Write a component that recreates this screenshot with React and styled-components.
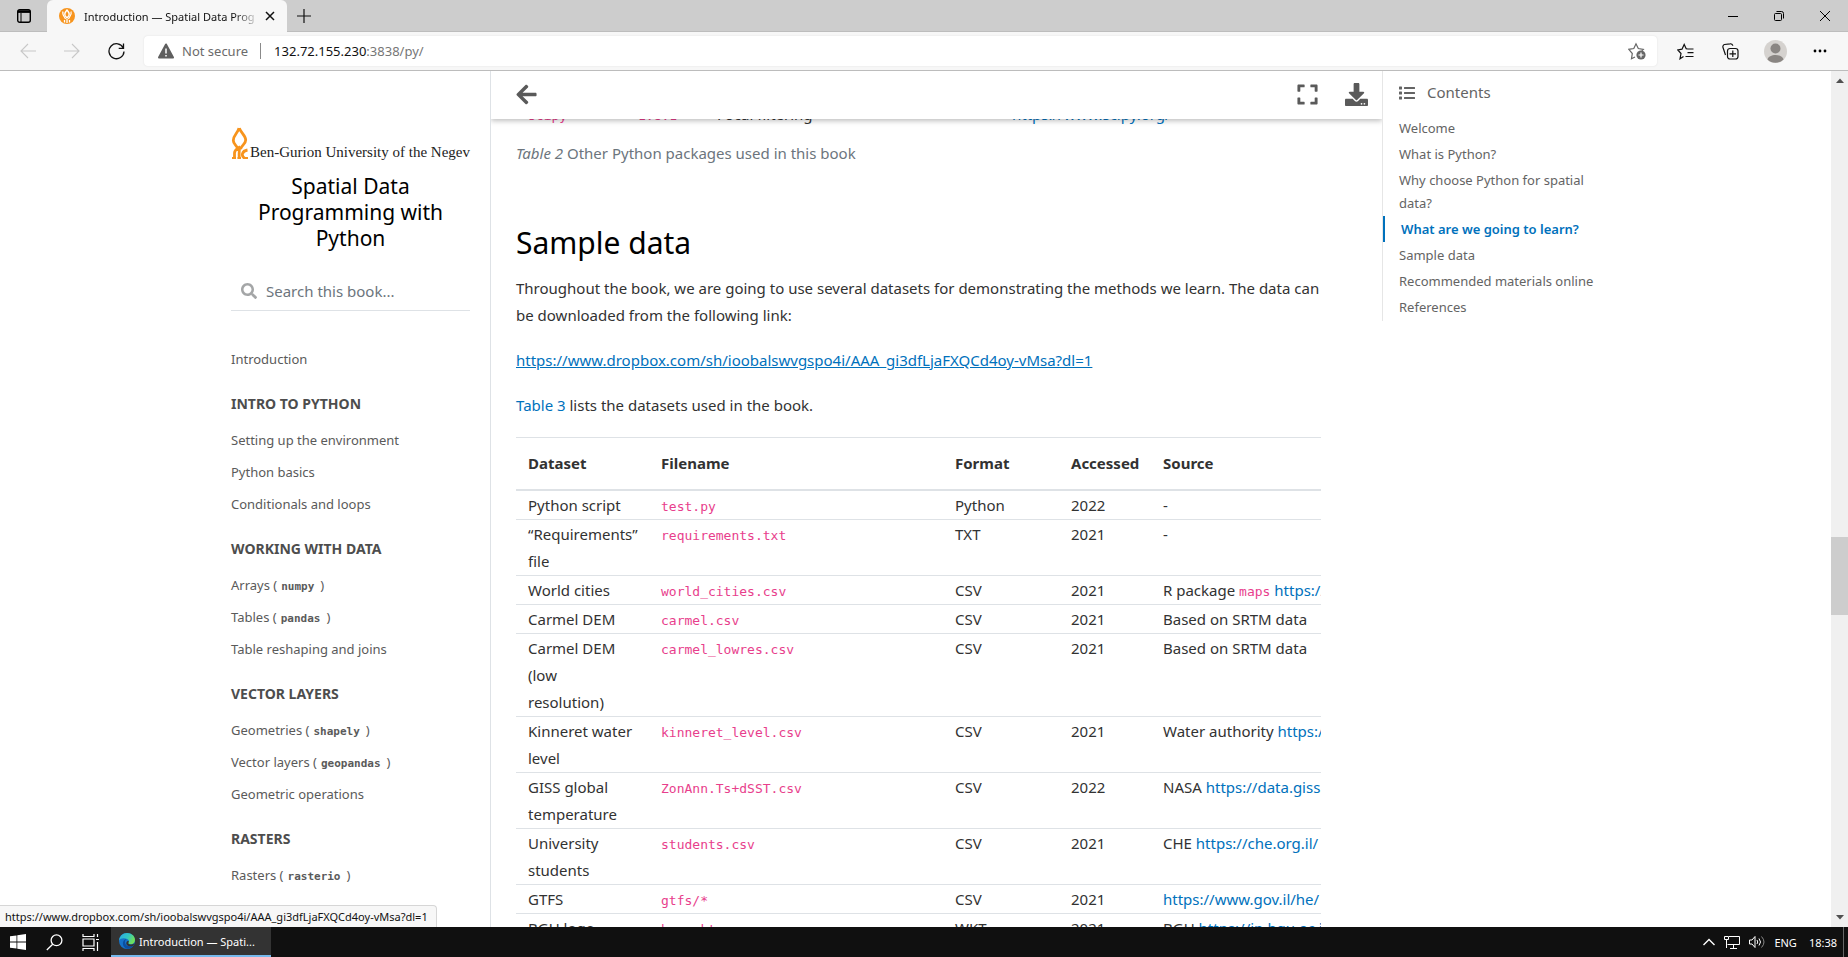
import React from "react";
import styled, { createGlobalStyle } from "styled-components";
import {
  FaArrowLeft,
  FaDownload,
  FaExpand,
  FaList,
  FaSearch,
} from "react-icons/fa";

const DROPBOX_URL =
  "https://www.dropbox.com/sh/ioobalswvgspo4i/AAA_gi3dfLjaFXQCd4oy-vMsa?dl=1";

const chapters = [
  {
    title: "Intro to Python",
    items: [
      { text: "Setting up the environment" },
      { text: "Python basics" },
      { text: "Conditionals and loops" },
    ],
  },
  {
    title: "Working with data",
    items: [
      { text: "Arrays", code: "numpy" },
      { text: "Tables", code: "pandas" },
      { text: "Table reshaping and joins" },
    ],
  },
  {
    title: "Vector layers",
    items: [
      { text: "Geometries", code: "shapely" },
      { text: "Vector layers", code: "geopandas" },
      { text: "Geometric operations" },
    ],
  },
  {
    title: "Rasters",
    items: [{ text: "Rasters", code: "rasterio" }],
  },
];

const contents = [
  "Welcome",
  "What is Python?",
  "Why choose Python for spatial data?",
  "What are we going to learn?",
  "Sample data",
  "Recommended materials online",
  "References",
];

const datasets = [
  { name: "Python script", file: "test.py", format: "Python", year: "2022", source: "-" },
  { name: "“Requirements” file", file: "requirements.txt", format: "TXT", year: "2021", source: "-" },
  { name: "World cities", file: "world_cities.csv", format: "CSV", year: "2021", source: "R package ", code: "maps", link: "https://www.r-project.org/" },
  { name: "Carmel DEM", file: "carmel.csv", format: "CSV", year: "2021", source: "Based on SRTM data" },
  { name: "Carmel DEM (low resolution)", file: "carmel_lowres.csv", format: "CSV", year: "2021", source: "Based on SRTM data" },
  { name: "Kinneret water level", file: "kinneret_level.csv", format: "CSV", year: "2021", source: "Water authority ", link: "https://data.gov.il/" },
  { name: "GISS global temperature", file: "ZonAnn.Ts+dSST.csv", format: "CSV", year: "2022", source: "NASA ", link: "https://data.giss.nasa.gov/" },
  { name: "University students", file: "students.csv", format: "CSV", year: "2021", source: "CHE ", link: "https://che.org.il/" },
  { name: "GTFS", file: "gtfs/*", format: "CSV", year: "2021", source: "", link: "https://www.gov.il/he/" },
  { name: "BGU logo", file: "bgu.wkt", format: "WKT", year: "2021", source: "BGU ", link: "https://in.bgu.ac.il/" },
];

export default function App() {
  return (
    <Screen>
      <GlobalStyle />
      <TabStrip />
      <AddressRow />
      <Viewport>
        <Book>
          <Sidebar />
          <Main />
          <Contents />
        </Book>
        <Scrollbar>
          <ScrollArrow viewBox="0 0 8 5">
            <path d="M0 5 4 0.5 8 5z" />
          </ScrollArrow>
          <TrackBefore />
          <Thumb />
          <TrackAfter />
          <ScrollArrow viewBox="0 0 8 5">
            <path d="M0 0h8L4 4.5z" />
          </ScrollArrow>
        </Scrollbar>
        <StatusBubble>{DROPBOX_URL}</StatusBubble>
      </Viewport>
      <Taskbar />
    </Screen>
  );
}

function TabStrip() {
  return (
    <Tabs>
      <WindowButton $width={47} aria-label="Tab actions">
        <svg width="16" height="16" viewBox="0 0 16 16" fill="none" stroke="#000" strokeWidth="1.4">
          <rect x="1.7" y="1.7" width="12.6" height="12.6" rx="2" />
          <path d="M2 3.6h12" strokeWidth="2.6" />
          <path d="M5 5v9" strokeWidth="1" />
        </svg>
      </WindowButton>
      <Tab>
        <svg width="16" height="16" viewBox="0 0 16 16">
          <circle cx="8" cy="8" r="8" fill="#f7941d" />
          <path d="M8 2C6 4.600 5 5.600 6.300 7.900L8 10l1.700-2.100C11 5.600 10 4.600 8 2z" fill="none" stroke="#fff" strokeWidth="1.300" />
          <path d="M4 3.500C2.800 6.500 5.500 8.500 6.500 11M12 3.500c1.200 3-1.500 5-2.500 7.500" fill="none" stroke="#fff" strokeWidth="1.200" />
          <path d="M5.500 14.500V12M8 15v-4M10.500 14.500V12" fill="none" stroke="#fff" strokeWidth="1.300" />
        </svg>
        <TabTitle>Introduction — Spatial Data Prog</TabTitle>
        <TabClose aria-label="Close tab">
          <svg width="10" height="10" viewBox="0 0 10 10" stroke="#111" strokeWidth="1.5">
            <path d="M1 1l8 8M9 1L1 9" />
          </svg>
        </TabClose>
      </Tab>
      <WindowButton $width={34} aria-label="New tab">
        <svg width="14" height="14" viewBox="0 0 14 14" stroke="#111" strokeWidth="1.2">
          <path d="M7 0v14M0 7h14" />
        </svg>
      </WindowButton>
      <Spacer />
      <WindowButton $width={46} aria-label="Minimize">
        <svg width="10" height="10" viewBox="0 0 10 10" stroke="#000">
          <path d="M0 5.500h10" />
        </svg>
      </WindowButton>
      <WindowButton $width={46} aria-label="Restore">
        <svg width="10" height="10" viewBox="0 0 10 10" stroke="#000" fill="none">
          <rect x="0.500" y="2.500" width="7" height="7" rx="1" />
          <path d="M2.500 0.500h5a2 2 0 0 1 2 2v5" />
        </svg>
      </WindowButton>
      <WindowButton $width={46} aria-label="Close">
        <svg width="10" height="10" viewBox="0 0 10 10" stroke="#000">
          <path d="M0 0l10 10M10 0L0 10" />
        </svg>
      </WindowButton>
    </Tabs>
  );
}

function AddressRow() {
  return (
    <Toolbar>
      <ToolButton $width={44} aria-label="Back">
        <svg width="16" height="16" viewBox="0 0 16 16" fill="none" stroke="#c8c8c8" strokeWidth="1.100">
          <path d="M16 8H1M8 1L1 8l7 7" />
        </svg>
      </ToolButton>
      <ToolButton $width={44} aria-label="Forward">
        <svg width="16" height="16" viewBox="0 0 16 16" fill="none" stroke="#c8c8c8" strokeWidth="1.100">
          <path d="M0 8h15M8 1l7 7-7 7" />
        </svg>
      </ToolButton>
      <ToolButton $width={44} aria-label="Refresh">
        <svg width="17" height="17" viewBox="0 0 17 17" fill="none" stroke="#111" strokeWidth="1.300">
          <path d="M15.300 5A7.500 7.500 0 1 0 16 8.500M15.500 0.500v4.800h-4.800" />
        </svg>
      </ToolButton>
      <AddressBar>
        <svg width="16" height="16" viewBox="0 0 16 16">
          <path d="M8 1.500 15 14.500H1z" fill="#5f5f5f" stroke="#5f5f5f" strokeWidth="2" strokeLinejoin="round" />
          <path d="M8 5.500v5M8 12v1.500" stroke="#fff" strokeWidth="1.500" />
        </svg>
        <Security>Not secure</Security>
        <UrlText>
          132.72.155.230<span>:3838/py/</span>
        </UrlText>
        <ToolButton $width={18} aria-label="Add to favorites">
          <svg width="18" height="18" viewBox="0 0 18 18" fill="none" stroke="#666" strokeWidth="1.200">
            <path d="M7 15l-3.500 1.800.8-5.300L0.800 7.300l5-.8L8 1.800l2.300 4.700 5 .8-1.500 1.500" />
            <circle cx="13" cy="13" r="4.600" fill="#666" stroke="none" />
            <path d="M13 10.500v5M10.500 13h5" stroke="#fff" />
          </svg>
        </ToolButton>
      </AddressBar>
      <BrowserTools>
        <ToolButton $width={24} aria-label="Favorites">
          <svg width="17" height="17" viewBox="0 0 17 17" fill="none" stroke="#111" strokeWidth="1.200">
            <path d="M6.500 13.500L3 15.800l1-5.300L0.800 7l4.200-.8L7.200 1.500l2 4.200L10.500 6M10.500 6h6M10.500 9.700h6M8.500 13.500h8" />
          </svg>
        </ToolButton>
        <ToolButton $width={24} aria-label="Collections">
          <svg width="17" height="17" viewBox="0 0 17 17" fill="none" stroke="#111" strokeWidth="1.200">
            <rect x="5.500" y="5.500" width="10.500" height="10.500" rx="2.500" />
            <path d="M10.800 7.500v6.500M7.500 10.800H14M3.500 12L1 4.500a2.300 2.300 0 0 1 1.500-3L8 .8a2.300 2.300 0 0 1 2.800 2" />
          </svg>
        </ToolButton>
        <ToolButton $width={24} aria-label="Profile">
          <svg width="23" height="23" viewBox="0 0 23 23">
            <circle cx="11.500" cy="11.500" r="11.500" fill="#d5d2cf" />
            <circle cx="11.500" cy="8.500" r="5" fill="#8a8683" />
            <path d="M3.500 19.500c1-6 15-6 16 0a11.500 11.500 0 0 1-16 0z" fill="#8a8683" />
          </svg>
        </ToolButton>
        <ToolButton $width={24} aria-label="Settings and more">
          <svg width="14" height="4" viewBox="0 0 14 4">
            <circle cx="2" cy="2" r="1.400" />
            <circle cx="7" cy="2" r="1.400" />
            <circle cx="12" cy="2" r="1.400" />
          </svg>
        </ToolButton>
      </BrowserTools>
    </Toolbar>
  );
}

function Sidebar() {
  return (
    <SidebarPane>
      <Logo href="#top">
        <svg width="17" height="32" viewBox="0 0 17 32" fill="none" stroke="#f7941d">
          <path d="M8 1C7 6 2.300 8 2.300 13.500 2.300 17.500 6 18.500 7 22M8.300 1c1 4 6.400 7.500 6.400 12 0 4-4 5-5.200 9" strokeWidth="2.800" />
          <path d="M8.200 32c0-6-.4-7 .6-12M3.500 32v-6c0-3.500 3-4 5.800-6.500M13.800 31.500c-4-2.500-3-7.500 2.700-8.500" strokeWidth="2.800" />
          <path d="M1 31h4M6.500 31h3.500M12 31h5" strokeWidth="1.800" />
        </svg>
        <span>Ben-Gurion University of the Negev</span>
      </Logo>
      <BookTitle>Spatial Data Programming with Python</BookTitle>
      <SearchForm role="search">
        <FaSearch size={16} aria-hidden="true" />
        <input type="search" aria-label="Search this book" placeholder="Search this book..." />
      </SearchForm>
      <ChapterNav aria-label="Chapters">
        <NavLink href="#introduction">Introduction</NavLink>
        {chapters.map((chapter) => (
          <React.Fragment key={chapter.title}>
            <NavHeading>{chapter.title}</NavHeading>
            {chapter.items.map((item) => (
              <NavLink key={item.text} href="#chapter">
                {item.text}
                {item.code && (
                  <>
                    {" ("}
                    <NavCode>{item.code}</NavCode>)
                  </>
                )}
              </NavLink>
            ))}
          </React.Fragment>
        ))}
      </ChapterNav>
    </SidebarPane>
  );
}

function Main() {
  return (
    <MainPane>
      <ArticleHeader>
        <HeaderButton aria-label="Toggle navigation">
          <FaArrowLeft size={23} />
        </HeaderButton>
        <HeaderActions>
          <HeaderButton aria-label="Fullscreen">
            <FaExpand size={23} />
          </HeaderButton>
          <HeaderButton aria-label="Download">
            <FaDownload size={23} />
          </HeaderButton>
        </HeaderActions>
      </ArticleHeader>
      <Article>
        <PackageTable>
          <colgroup>
            <col width="110" />
            <col width="79" />
            <col width="295" />
            <col />
          </colgroup>
          <tbody>
            <tr>
              <td><Code>scipy</Code></td>
              <td><Code>1.8.1</Code></td>
              <td>Focal filtering</td>
              <td><Link href="#scipy">https://www.scipy.org/</Link></td>
            </tr>
          </tbody>
        </PackageTable>
        <Caption>
          <em>Table 2</em> Other Python packages used in this book
        </Caption>
        <h2>Sample data</h2>
        <p>
          Throughout the book, we are going to use several datasets for
          demonstrating the methods we learn. The data can be downloaded from
          the following link:
        </p>
        <p>
          <Link href="#dropbox" $underlined>{DROPBOX_URL}</Link>
        </p>
        <p>
          <Link href="#table-3">Table 3</Link> lists the datasets used in the
          book.
        </p>
        <TableClip>
          <DataTable>
            <colgroup>
              <col width="133" />
              <col width="294" />
              <col width="116" />
              <col width="92" />
              <col width="300" />
            </colgroup>
            <thead>
              <tr>
                <th>Dataset</th>
                <th>Filename</th>
                <th>Format</th>
                <th>Accessed</th>
                <th>Source</th>
              </tr>
            </thead>
            <tbody>
              {datasets.map((row) => (
                <tr key={row.file}>
                  <td>{row.name}</td>
                  <td><Code>{row.file}</Code></td>
                  <td>{row.format}</td>
                  <td>{row.year}</td>
                  <SourceCell>
                    {row.source}
                    {row.code && <><Code>{row.code}</Code>{" "}</>}
                    {row.link && <Link href="#source">{row.link}</Link>}
                  </SourceCell>
                </tr>
              ))}
            </tbody>
          </DataTable>
        </TableClip>
      </Article>
    </MainPane>
  );
}

function Contents() {
  return (
    <ContentsPane aria-label="Contents">
      <ContentsTitle>
        <FaList size={16} aria-hidden="true" />
        Contents
      </ContentsTitle>
      {contents.map((entry) => (
        <ContentsLink
          key={entry}
          href="#section"
          $active={entry === "What are we going to learn?"}
        >
          {entry}
        </ContentsLink>
      ))}
    </ContentsPane>
  );
}

function Taskbar() {
  return (
    <TaskbarRow>
      <TaskButton $width={36} aria-label="Start">
        <svg width="16" height="16" viewBox="0 0 16 16" fill="#fff">
          <path d="M0 2.300l6.500-.9v6.200H0zM7.300 1.300L16 0v7.600H7.300zM0 8.400h6.500v6.200L0 13.700zM7.300 8.400H16V16l-8.700-1.300z" />
        </svg>
      </TaskButton>
      <TaskButton $width={36} aria-label="Search">
        <svg width="17" height="17" viewBox="0 0 17 17" fill="none" stroke="#fff" strokeWidth="1.300">
          <circle cx="10.500" cy="6.300" r="5.400" />
          <path d="M6.700 10.200L.8 16" />
        </svg>
      </TaskButton>
      <TaskButton $width={36} aria-label="Task view">
        <svg width="17" height="17" viewBox="0 0 17 17" fill="none" stroke="#fff" strokeWidth="1.200">
          <path d="M1 0v2.500h11V0M1 17v-2.500h11V17M1 5h11v7H1zM15.500 0v3M15.500 8v9M14 5.500h3" />
        </svg>
      </TaskButton>
      <RunningApp>
        <svg width="16" height="16" viewBox="0 0 16 16">
          <defs>
            <linearGradient id="edgeTop" x1="0" y1="0" x2="1" y2="0.400">
              <stop offset="0" stopColor="#2aa7e8" />
              <stop offset="0.600" stopColor="#33c6bf" />
              <stop offset="1" stopColor="#6fe05a" />
            </linearGradient>
          </defs>
          <circle cx="8" cy="8" r="8" fill="#1573c9" />
          <path d="M0 7.500C.5 3 3.800 0 8 0c4.500 0 8 3.200 8 7 0 2.800-2 4.300-4.300 4.300-1.700 0-2.700-.7-2.400-1.500.5-.7.800-1.300.6-2.300C9.400 5.300 2 3.500 0 7.500z" fill="url(#edgeTop)" />
          <path d="M6 8.500c-.5 3.500 3 6 8.500 4C11 18.500 3 15.500 4 9.500 4.300 7.500 6 6 7.500 6 6.700 6.700 6.100 7.500 6 8.500z" fill="#0c4fa0" />
          <path d="M9.300 9.800c-.3 1 1 1.900 3 1.700 1.500-.1 2.500-.7 3.200-1.500-.3 1.300-.8 2.200-1.500 3-4.500 1-7.500-.7-6.500-3.700.4-1 1.400-1.500 2.200-1.200.1.600-.1 1.200-.4 1.700z" fill="#333" />
        </svg>
        Introduction — Spati...
      </RunningApp>
      <Spacer />
      <Tray>
        <svg width="12" height="8" viewBox="0 0 12 8" fill="none" stroke="#fff" strokeWidth="1.400">
          <path d="M0.500 7L6 1.500 11.500 7" />
        </svg>
        <svg width="16" height="14" viewBox="0 0 16 14" fill="none" stroke="#fff">
          <path d="M5 1.500h10.500v8H3.500M9.500 9.500v3.500M6 13.500h7M2.500 5v8" />
          <path d="M.5 1.500h4v3h-4z" />
        </svg>
        <svg width="16" height="14" viewBox="0 0 16 14" fill="none" stroke="#fff">
          <path d="M.5 5h2.500l3-3.500v11L3 9H.5zM8 5q1.500 2 0 4M10 3.500q3 3.500 0 7" />
          <path d="M12.500 1.500q5 5.500 0 11" stroke="#888" />
        </svg>
        <span>ENG</span>
        <time>18:38</time>
      </Tray>
      <ShowDesktop aria-label="Show desktop" />
    </TaskbarRow>
  );
}

// styled-components
const GlobalStyle = createGlobalStyle`
  * {
    box-sizing: border-box;
  }

  body {
    margin: 0;
    font-family: "Noto Sans", "Open Sans", sans-serif;
    color: #323232;
    background: #fff;
  }

  button,
  input {
    font: inherit;
  }

  button {
    padding: 0;
    border: none;
    background: none;
    color: inherit;
  }

  a {
    text-decoration: none;
  }
`;

const Screen = styled.div`
  display: flex;
  flex-direction: column;
  height: 100vh;
  overflow: hidden;
`;

const Spacer = styled.div`
  flex: 1;
`;

const Tabs = styled.div`
  display: flex;
  flex: none;
  height: 32px;
  background: #cdcdcd;
  box-shadow: inset 0 -1px #bdbdbd;
`;

const WindowButton = styled.button`
  display: flex;
  align-items: center;
  justify-content: center;
  width: ${({ $width }) => $width}px;
  height: 32px;
`;

const Tab = styled.div`
  display: flex;
  align-items: center;
  width: 240px;
  height: 32px;
  padding: 0 12px;
  border-radius: 6px 6px 0 0;
  background: #f7f7f7;
  font-size: 11px;
  color: #111;
`;

const TabTitle = styled.span`
  flex: 1;
  margin-left: 9px;
  overflow: hidden;
  white-space: nowrap;
  mask-image: linear-gradient(to right, #000 150px, transparent 176px);
`;

const TabClose = styled.button`
  display: flex;
  margin-left: 8px;
`;

const Toolbar = styled.div`
  display: flex;
  flex: none;
  align-items: center;
  height: 39px;
  padding: 0 16px 0 6px;
  background: #f7f7f7;
  border-bottom: 1px solid #bcbcbc;
`;

const ToolButton = styled.button`
  display: flex;
  align-items: center;
  justify-content: center;
  width: ${({ $width }) => $width}px;
  height: 30px;
`;

const AddressBar = styled.div`
  display: flex;
  flex: 1;
  align-items: center;
  height: 30px;
  margin-left: 6px;
  padding: 0 11px 0 14px;
  border-radius: 4px;
  background: #fff;
  box-shadow: 0 0 2px rgba(0, 0, 0, 0.1);
  font-size: 13px;
`;

const Security = styled.span`
  margin-left: 8px;
  padding-right: 12px;
  border-right: 1px solid #8a8a8a;
  line-height: 16px;
  color: #6b6b6b;
`;

const UrlText = styled.span`
  flex: 1;
  margin-left: 13px;
  color: #111;

  span {
    color: #767676;
  }
`;

const BrowserTools = styled.div`
  display: flex;
  gap: 21px;
  margin-left: 16px;
`;

const Viewport = styled.div`
  position: relative;
  display: flex;
  flex: 1;
  min-height: 0;
  overflow: hidden;
`;

const Book = styled.div`
  display: flex;
  flex: 1;
  max-width: 1409px;
  min-width: 0;
  margin: 0 auto;
`;

const Scrollbar = styled.div`
  display: flex;
  flex-direction: column;
  align-items: center;
  width: 17px;
  padding: 7px 0;
  background: #f0f0f0;
`;

const ScrollArrow = styled.svg`
  width: 8px;
  height: 5px;
  fill: #505050;
`;

const TrackBefore = styled.div`
  flex: 454;
`;

const Thumb = styled.div`
  flex: 78;
  width: 100%;
  background: #cdcdcd;
`;

const TrackAfter = styled.div`
  flex: 300;
`;

const StatusBubble = styled.div`
  position: absolute;
  bottom: 0;
  left: 0;
  padding: 0 8px 0 5px;
  border: 1px solid #d6d6d6;
  border-width: 1px 1px 0 0;
  border-radius: 0 4px 0 0;
  background: #f7f7f7;
  font-size: 11px;
  line-height: 21px;
  color: #111;
`;

const SidebarPane = styled.aside`
  flex: none;
  width: 280px;
  padding: 54px 20px 0;
  border-right: 1px solid #dee2e6;
  overflow: hidden;
`;

const Logo = styled.a`
  display: flex;
  align-items: center;
  gap: 2px;
  height: 36px;
  font-family: "Liberation Serif", serif;
  font-size: 15px;
  white-space: nowrap;
  color: #222;

  svg {
    flex: none;
  }

  span {
    margin-top: 18px;
  }
`;

const BookTitle = styled.h1`
  margin: 12px 0 0;
  padding: 0 20px;
  font-size: 21px;
  font-weight: 400;
  line-height: 26px;
  text-align: center;
  color: #000;
`;

const SearchForm = styled.form`
  display: flex;
  align-items: center;
  height: 40px;
  margin-top: 20px;
  padding-left: 10px;
  border-bottom: 1px solid #dee2e6;
  color: #a4a6a7;

  input {
    flex: 1;
    min-width: 0;
    margin-left: 7px;
    border: none;
    outline: none;
    font-size: 15px;
  }

  input::placeholder {
    color: #6c757d;
  }
`;

const ChapterNav = styled.nav`
  margin-top: 32px;
`;

const NavLink = styled.a`
  display: block;
  font-size: 13px;
  line-height: 32px;
  white-space: nowrap;
  color: #5a5a5a;
`;

const NavHeading = styled.h3`
  margin: 11px 0 2px;
  font-size: 14px;
  font-weight: 700;
  line-height: 36px;
  text-transform: uppercase;
  color: #4d4d4d;
`;

const NavCode = styled.code`
  padding: 0 6px 0 4px;
  font-family: "DejaVu Sans Mono", monospace;
  font-size: 11px;
  font-weight: 700;
  line-height: 16px;
`;

const MainPane = styled.main`
  flex: 1;
  min-width: 0;
  overflow: hidden;
`;

const ArticleHeader = styled.header`
  position: relative;
  z-index: 1;
  display: flex;
  align-items: center;
  justify-content: space-between;
  height: 48px;
  padding: 0 14px 2px 24px;
  background: #fff;
  box-shadow: 0 2px 5px rgba(0, 0, 0, 0.25);
`;

const HeaderActions = styled.div`
  display: flex;
  gap: 26px;
`;

const HeaderButton = styled.button`
  display: flex;
  color: #5a5a5a;
`;

const Article = styled.article`
  margin-top: -18px;
  padding: 0 61px 0 25px;
  font-size: 15px;
  line-height: 27px;

  h2 {
    margin: 56px 0 12px;
    font-size: 30px;
    font-weight: 400;
    line-height: 40px;
    color: #000;
  }

  p {
    margin: 0 0 18px;
  }
`;

const Code = styled.code`
  font-family: "DejaVu Sans Mono", monospace;
  font-size: 13px;
  line-height: 20px;
  color: #e83e8c;
`;

const Link = styled.a`
  color: #0071bc;
  text-decoration: ${({ $underlined }) => ($underlined ? "underline" : "none")};
`;

const PackageTable = styled.table`
  width: 100%;
  table-layout: fixed;
  border-collapse: collapse;

  td {
    padding: 0 0 0 12px;
  }
`;

const Caption = styled.div`
  margin-top: 12px;
  color: #6c757d;
`;

const TableClip = styled.div`
  overflow: hidden;
`;

const DataTable = styled.table`
  width: 935px;
  table-layout: fixed;
  border-spacing: 0;
  text-align: left;

  th {
    padding: 12px 0 12px 12px;
    border-top: 1px solid #dee2e6;
    border-bottom: 2px solid #dee2e6;
    font-weight: 700;
  }

  td {
    padding: 1px 14px 0 12px;
    border-bottom: 1px solid #dee2e6;
    vertical-align: top;
  }
`;

const SourceCell = styled.td`
  white-space: nowrap;
`;

const ContentsPane = styled.nav`
  flex: none;
  align-self: flex-start;
  width: 238px;
  padding: 8px 0 1px;
  border-left: 1px solid #e6e6e6;
`;

const ContentsTitle = styled.div`
  display: flex;
  align-items: center;
  gap: 12px;
  padding: 0 16px;
  margin-bottom: 9px;
  font-size: 15px;
  line-height: 27px;
  color: #646464;
`;

const ContentsLink = styled.a`
  display: block;
  padding: 2px 16px 1px;
  border-left: ${({ $active }) => ($active ? "2px solid #0071bc" : "none")};
  font-size: 13px;
  font-weight: ${({ $active }) => ($active ? 600 : 400)};
  line-height: 23px;
  color: ${({ $active }) => ($active ? "#0071bc" : "#646464")};
`;

const TaskbarRow = styled.footer`
  display: flex;
  flex: none;
  height: 30px;
  background: #101010;
  font-size: 11px;
  color: #fff;
`;

const TaskButton = styled.button`
  display: flex;
  align-items: center;
  justify-content: center;
  width: ${({ $width }) => $width}px;
`;

const RunningApp = styled.button`
  display: flex;
  align-items: center;
  gap: 4px;
  width: 160px;
  margin-left: 3px;
  padding: 0 8px;
  border-bottom: 2px solid #76b9ed;
  background: #333;
`;

const Tray = styled.div`
  display: flex;
  align-items: center;
  gap: 9px;
  padding-right: 6px;

  time {
    margin-left: 3px;
  }
`;

const ShowDesktop = styled.button`
  width: 5px;
  border-left: 1px solid #666;
`;
